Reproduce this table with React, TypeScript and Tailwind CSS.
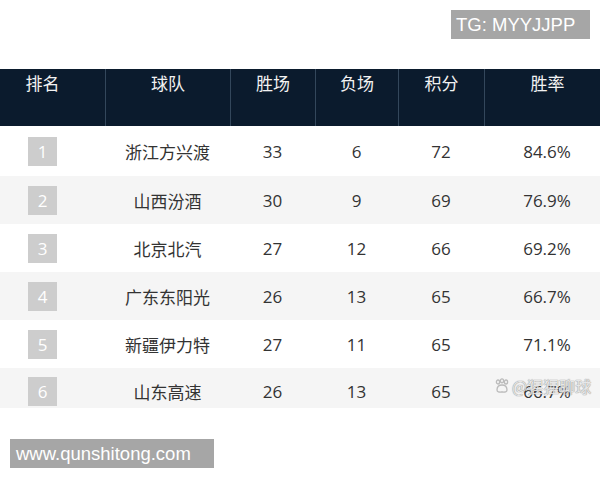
const rows = [
  { rank: 1, team: '浙江方兴渡', win: 33, lose: 6, pts: 72, rate: '84.6%' },
  { rank: 2, team: '山西汾酒', win: 30, lose: 9, pts: 69, rate: '76.9%' },
  { rank: 3, team: '北京北汽', win: 27, lose: 12, pts: 66, rate: '69.2%' },
  { rank: 4, team: '广东东阳光', win: 26, lose: 13, pts: 65, rate: '66.7%' },
  { rank: 5, team: '新疆伊力特', win: 27, lose: 11, pts: 65, rate: '71.1%' },
  { rank: 6, team: '山东高速', win: 26, lose: 13, pts: 65, rate: '66.7%' },
];

const cols = 'grid grid-cols-[105px_125px_85px_83px_86px_1fr]';
const cjk = "font-['Noto_Sans_CJK_SC','Noto_Sans',sans-serif]";
const num = "font-['Open_Sans','Noto_Sans_CJK_SC',sans-serif]";

const heads = ['胜场', '负场', '积分'];

export default function App() {
  return (
    <div className="relative h-[480px] w-[600px] overflow-hidden bg-white">
      <div className="flex h-[69px] justify-end pr-[10px] pt-[10px]">
        <div className="h-[29px] w-[139px] bg-[#a6a6a6] pl-[5px] font-['Liberation_Sans',Arial,sans-serif] text-[18.5px] leading-[29px] text-white">
          TG: MYYJJPP
        </div>
      </div>

      <div className={`${cols} h-[57px] bg-[#0b1b2d] text-[17px] leading-[25px] text-[#f2f2f2] ${cjk}`}>
        <div className="flex w-[85px] justify-center pt-[1px]">排名</div>
        <div className="flex justify-center border-l border-[#33475b] pt-[1px]">球队</div>
        {heads.map((h) => (
          <div key={h} className="flex justify-center border-l border-[#33475b] pt-[1px]">
            {h}
          </div>
        ))}
        <div className="border-l border-[#33475b] pt-[1px]">
          <div className="flex w-[125px] justify-center">胜率</div>
        </div>
      </div>

      <div>
        {rows.map((r, i) => (
          <div
            key={r.rank}
            className={`${cols} items-start text-[17px] text-[#333] ${i % 2 ? 'bg-[#f5f5f5]' : 'bg-white'} ${
              i === 0 ? 'h-[50px] pt-[11px]' : i === 5 ? 'h-[40px] pt-[9px]' : 'h-[48px] pt-[10px]'
            }`}
          >
            <div className="flex w-[85px] justify-center">
              <div className={`flex h-[29px] w-[29px] items-center justify-center bg-[#cdcdcd] text-white ${num}`}>{r.rank}</div>
            </div>
            <div className={`flex h-[29px] items-center justify-center ${cjk}`}>{r.team}</div>
            <div className={`flex h-[29px] items-center justify-center ${num}`}>{r.win}</div>
            <div className={`flex h-[29px] items-center justify-center ${num}`}>{r.lose}</div>
            <div className={`flex h-[29px] items-center justify-center ${num}`}>{r.pts}</div>
            <div className={`flex h-[29px] w-[126px] items-center justify-center ${num}`}>{r.rate}</div>
          </div>
        ))}
      </div>

      <div className="mt-[31px] ml-[10px] h-[29px] w-[204px] bg-[#a6a6a6] pl-[6px] font-['Liberation_Sans',Arial,sans-serif] text-[18.5px] leading-[29px] text-white">
        www.qunshitong.com
      </div>

      {/* watermark over the last row */}
      <div className="absolute left-[494px] top-[377px] flex items-center gap-[2px] text-[#d9d9d9] opacity-90">
        <svg width="16" height="16" viewBox="0 0 16 16" fill="none" stroke="#b5b5b5" strokeWidth="1.3">
          <ellipse cx="4" cy="4" rx="1.6" ry="2" />
          <ellipse cx="8" cy="2.8" rx="1.6" ry="2" />
          <ellipse cx="12" cy="4" rx="1.6" ry="2" />
          <path d="M3 12 C3 8 6 7 8 7 C10 7 13 8 13 12 C13 14.5 10 14 8 14 C6 14 3 14.5 3 12 Z" />
        </svg>
        <span className={`text-[16px] leading-[18px] text-[#e6e6e6] [text-shadow:0_0_1px_#8c8c8c,0_0_1px_#8c8c8c] ${cjk}`}>@猩猩聊球</span>
      </div>
    </div>
  );
}
